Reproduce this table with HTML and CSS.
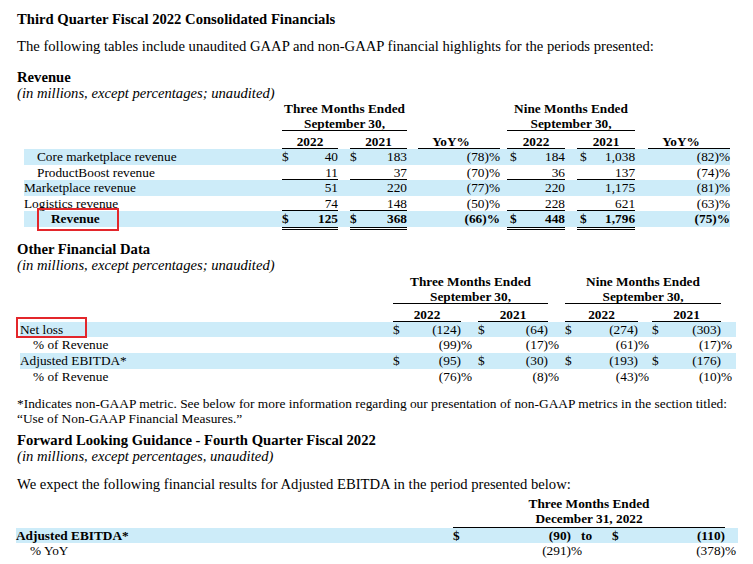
FILE: index.html
```html
<!DOCTYPE html>
<html>
<head>
<meta charset="utf-8">
<title>Third Quarter Fiscal 2022 Consolidated Financials</title>
<link rel="stylesheet" href="styles.css">
</head>
<body>
<div class="page">
  <h1 class="title">Third Quarter Fiscal 2022 Consolidated Financials</h1>
  <p class="lead">The following tables include unaudited GAAP and non-GAAP financial highlights for the periods presented:</p>

  <h2 class="sec">Revenue</h2>
  <p class="sub">(in millions, except percentages; unaudited)</p>
  <table class="fin rev">
    <colgroup>
      <col class="w-rlabel"><col class="w56"><col class="w12"><col class="w57"><col class="w11"><col class="w82">
      <col class="w7"><col class="w58"><col class="w12"><col class="w58"><col class="w13"><col class="w82">
    </colgroup>
    <tr class="hd">
      <td></td><td colspan="3">Three Months Ended</td><td></td><td></td><td></td><td colspan="3">Nine Months Ended</td><td></td><td></td>
    </tr>
    <tr class="hd">
      <td></td><td colspan="3" class="u">September 30,</td><td></td><td></td><td></td><td colspan="3" class="u">September 30,</td><td></td><td></td>
    </tr>
    <tr class="hd yr">
      <td></td><td class="u">2022</td><td></td><td class="u">2021</td><td></td><td class="u yoyh">YoY%</td>
      <td></td><td class="u">2022</td><td></td><td class="u">2021</td><td></td><td class="u yoyh">YoY%</td>
    </tr>
    <tr class="row bl">
      <td class="i1">Core marketplace revenue</td>
      <td class="n"><span class="d">$</span>40</td><td></td><td class="n"><span class="d">$</span>183</td><td></td><td class="n">(78)%</td>
      <td></td><td class="n"><span class="d d3">$</span>184</td><td></td><td class="n"><span class="d d3">$</span>1,038</td><td></td><td class="n">(82)%</td>
    </tr>
    <tr class="row">
      <td class="i1">ProductBoost revenue</td>
      <td class="n u">11</td><td></td><td class="n u">37</td><td></td><td class="n">(70)%</td>
      <td></td><td class="n u">36</td><td></td><td class="n u">137</td><td></td><td class="n">(74)%</td>
    </tr>
    <tr class="row bl">
      <td>Marketplace revenue</td>
      <td class="n">51</td><td></td><td class="n">220</td><td></td><td class="n">(77)%</td>
      <td></td><td class="n">220</td><td></td><td class="n">1,175</td><td></td><td class="n">(81)%</td>
    </tr>
    <tr class="row">
      <td>Logistics revenue</td>
      <td class="n u">74</td><td></td><td class="n u">148</td><td></td><td class="n">(50)%</td>
      <td></td><td class="n u">228</td><td></td><td class="n u">621</td><td></td><td class="n">(63)%</td>
    </tr>
    <tr class="row bl tot">
      <td class="i2"><span class="mark mark-rev">Revenue</span></td>
      <td class="n dbl"><span class="d">$</span>125</td><td></td><td class="n dbl"><span class="d">$</span>368</td><td></td><td class="n">(66)%</td>
      <td></td><td class="n dbl"><span class="d d3">$</span>448</td><td></td><td class="n dbl"><span class="d d3">$</span>1,796</td><td></td><td class="n">(75)%</td>
    </tr>
  </table>

  <h2 class="sec sec-other">Other Financial Data</h2>
  <p class="sub sub-other">(in millions, except percentages; unaudited)</p>
  <table class="fin oth">
    <colgroup>
      <col class="w-olabel"><col class="w68"><col class="w17"><col class="w70"><col class="w17"><col class="w73"><col class="w14"><col class="w69"><col class="w15">
    </colgroup>
    <tr class="hd">
      <td></td><td colspan="3">Three Months Ended</td><td></td><td colspan="3">Nine Months Ended</td><td></td>
    </tr>
    <tr class="hd">
      <td></td><td colspan="3" class="u">September 30,</td><td></td><td colspan="3" class="u">September 30,</td><td></td>
    </tr>
    <tr class="hd yr">
      <td></td><td class="u">2022</td><td></td><td class="u">2021</td><td></td><td class="u">2022</td><td></td><td class="u">2021</td><td></td>
    </tr>
    <tr class="row orow bl">
      <td><span class="mark mark-net">Net loss</span></td>
      <td class="n"><span class="d">$</span>(124)</td><td></td><td class="n"><span class="d">$</span>(64)</td><td></td>
      <td class="n"><span class="d">$</span>(274)</td><td></td><td class="n"><span class="d">$</span>(303)</td><td></td>
    </tr>
    <tr class="row orow">
      <td class="i1">% of Revenue</td>
      <td class="n">(99)<span class="p">%</span></td><td></td><td class="n">(17)<span class="p">%</span></td><td></td>
      <td class="n">(61)<span class="p">%</span></td><td></td><td class="n">(17)<span class="p">%</span></td><td></td>
    </tr>
    <tr class="row orow bl">
      <td>Adjusted EBITDA*</td>
      <td class="n"><span class="d">$</span>(95)</td><td></td><td class="n"><span class="d">$</span>(30)</td><td></td>
      <td class="n"><span class="d">$</span>(193)</td><td></td><td class="n"><span class="d">$</span>(176)</td><td></td>
    </tr>
    <tr class="row orow">
      <td class="i1">% of Revenue</td>
      <td class="n">(76)<span class="p">%</span></td><td></td><td class="n">(8)<span class="p">%</span></td><td></td>
      <td class="n">(43)<span class="p">%</span></td><td></td><td class="n">(10)<span class="p">%</span></td><td></td>
    </tr>
  </table>

  <p class="note">*Indicates non-GAAP metric. See below for more information regarding our presentation of non-GAAP metrics in the section titled:<br>&ldquo;Use of Non-GAAP Financial Measures.&rdquo;</p>

  <h2 class="sec sec-fwd">Forward Looking Guidance - Fourth Quarter Fiscal 2022</h2>
  <p class="sub">(in millions, except percentages, unaudited)</p>
  <p class="lead lead-fwd">We expect the following financial results for Adjusted EBITDA in the period presented below:</p>
  <table class="fin fwd">
    <colgroup>
      <col class="w-flabel"><col class="w118"><col class="w31"><col class="w123"><col class="w13">
    </colgroup>
    <tr class="hd">
      <td></td><td colspan="3">Three Months Ended</td><td></td>
    </tr>
    <tr class="hd dec">
      <td></td><td colspan="3" class="u">December 31, 2022</td><td></td>
    </tr>
    <tr class="row bl tot">
      <td>Adjusted EBITDA*</td>
      <td class="n"><span class="d">$</span>(90)</td><td class="to">to</td><td class="n"><span class="d d10">$</span>(110)</td><td></td>
    </tr>
    <tr class="row">
      <td class="i1 i-fwd">% YoY</td>
      <td class="n">(291)<span class="p">%</span></td><td></td><td class="n">(378)<span class="p">%</span></td><td></td>
    </tr>
  </table>
</div>
</body>
</html>
```

FILE: styles.css
```css
* { box-sizing: border-box; }

body {
  margin: 0;
  background: #fff;
  color: #000;
  font-family: "Liberation Serif", "Times New Roman", Times, serif;
}

.page {
  padding: 11px 0 0 17px;
  font-size: 14.65px;
}

.title {
  font-size: 14.65px;
  font-weight: bold;
  line-height: 17px;
  margin: 0;
}

.lead {
  margin: 10px 0 0;
  line-height: 17px;
}

.sec {
  font-size: 14.65px;
  font-weight: bold;
  line-height: 16px;
  margin: 14px 0 0;
}

.sub {
  font-style: italic;
  line-height: 16px;
  margin: 0;
}

.sec-other { margin-top: 14px; }
.sub-other { line-height: 17px; }
.sec-fwd { margin-top: 6px; }
.lead-fwd { margin-top: 12px; }

/* tables */
.fin {
  border-collapse: separate;
  border-spacing: 0;
  table-layout: fixed;
  font-size: 13.3px;
}

.fin td {
  padding: 0;
  white-space: nowrap;
  line-height: 15px;
  vertical-align: middle;
}

.hd td {
  font-weight: bold;
  text-align: center;
}

.yr td { padding-top: 3px; padding-bottom: 0; }
.yoyh { padding-right: 16px !important; }

.row td { line-height: 15.5px; }
.orow td { line-height: 15.7px; }

.bl td { background: #cdecf9; }
.tot td { font-weight: bold; }

.u { box-shadow: inset 0 -1px 0 #000; }
.dbl { box-shadow: 0 1px 0 #000, 0 2px 0 #fff, 0 3px 0 #000; }

.n { text-align: right; }
.d { float: left; }
.d3 { margin-left: 3px; }
.d10 { margin-left: 10px; }
.p { margin-right: -0.833em; }

.i1 { padding-left: 13px !important; }
.i2 { padding-left: 27px !important; }
.i-fwd { padding-left: 14px !important; }

.to { text-align: center; }

/* annotation boxes */
.mark { position: relative; }
.mark::after {
  content: "";
  position: absolute;
  border: 2px solid #e3262b;
}
.mark-rev::after { left: -14px; right: -19px; top: -3px; bottom: -5px; }
.mark-net::after { left: -4px; right: -24px; top: -5px; bottom: -1px; }

/* revenue table: x 24 to 730 */
.rev { width: 706px; margin-left: 7px; }
.w-rlabel { width: 258px; }
.w56 { width: 56px; }
.w57 { width: 57px; }
.w58 { width: 58px; }
.w82 { width: 82px; }
.w7 { width: 7px; }
.w11 { width: 11px; }
.w12 { width: 12px; }
.w13 { width: 13px; }

/* other table: x 20 to 736 */
.oth { width: 716px; margin-left: 3px; }
.w-olabel { width: 373px; }
.w68 { width: 68px; }
.w17 { width: 17px; }
.w70 { width: 70px; }
.w73 { width: 73px; }
.w14 { width: 14px; }
.w69 { width: 69px; }
.w15 { width: 15px; }

.note {
  font-size: 13.4px;
  line-height: 14.5px;
  margin: 13px 0 0;
}

/* forward table: x 16 to 738 */
.fwd { width: 722px; margin: 3px 0 0 -1px; }
.w-flabel { width: 437px; }
.w118 { width: 118px; }
.w31 { width: 31px; }
.w123 { width: 123px; }
.dec td { padding-bottom: 1.5px; }
```
